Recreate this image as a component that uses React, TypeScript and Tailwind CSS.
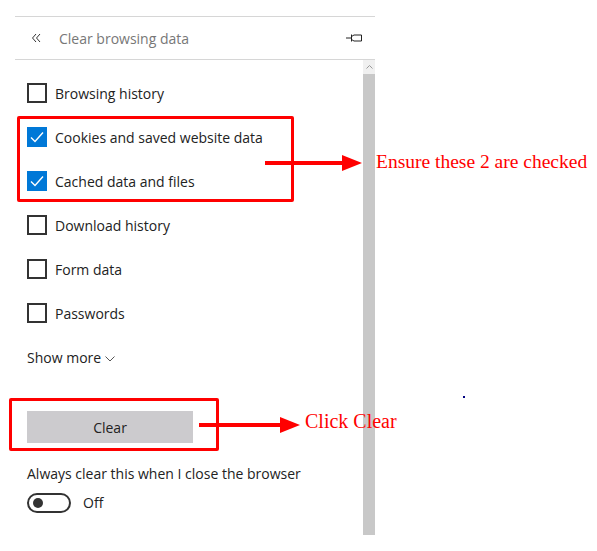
const items = [
  { label: 'Browsing history', checked: false },
  { label: 'Cookies and saved website data', checked: true },
  { label: 'Cached data and files', checked: true },
  { label: 'Download history', checked: false },
  { label: 'Form data', checked: false },
  { label: 'Passwords', checked: false },
];

function Checkbox({ checked }: { checked: boolean }) {
  if (checked) {
    return (
      <div className="w-5 h-5 bg-[#0078d7] flex items-center justify-center shrink-0">
        <svg width="14" height="12" viewBox="0 0 14 12" fill="none">
          <path d="M1 6.5 L5 10.5 L13 1.5" stroke="white" strokeWidth="1.4" />
        </svg>
      </div>
    );
  }
  return <div className="w-5 h-5 border-2 border-[#333] shrink-0" />;
}

function Arrow({ width }: { width: number }) {
  return (
    <svg width={width} height="20" viewBox={`0 0 ${width} 20`}>
      <rect x="0" y="8" width={width - 18} height="4" fill="#ff0000" />
      <polygon points={`${width - 20},2 ${width},10 ${width - 20},18`} fill="#ff0000" />
    </svg>
  );
}

export default function App() {
  return (
    <div className="relative w-[597px] h-[551px] bg-white overflow-hidden font-['Open_Sans','Noto_Sans',sans-serif] text-[#222]">
      <div className="ml-[15px] mt-4 w-[360px] border-t border-[#d6d6d6]">
        {/* Header */}
        <div className="h-[43px] flex items-center border-b border-[#d6d6d6] pl-[16px] pr-[13px]">
          <svg width="10" height="10" viewBox="0 0 10 10" fill="none" className="mr-[18px]">
            <path d="M5 1 L1.5 5 L5 9 M9 1 L5.5 5 L9 9" stroke="#333" strokeWidth="1" />
          </svg>
          <span className="flex-1 text-[14px] text-[#777]">Clear browsing data</span>
          <svg width="16" height="10" viewBox="0 0 16 10" fill="none">
            <path d="M0 5 H5 M5.5 1.5 V8.5 M5.5 3.5 L8 2 H15.5 V8 H8 L5.5 6.5" stroke="#222" strokeWidth="1" />
          </svg>
        </div>

        {/* Body */}
        <div className="flex h-[475px]">
          <div className="flex-1 pl-3 pt-[11px] flex flex-col">
            {items.map(item => (
              <div key={item.label} className="h-[44px] flex items-center gap-2">
                <Checkbox checked={item.checked} />
                <span className="text-[14px]">{item.label}</span>
              </div>
            ))}
            <div className="h-[44px] flex items-center gap-1 text-[14px]">
              Show more
              <svg width="10" height="6" viewBox="0 0 10 6" fill="none" className="mt-[3px]">
                <path d="M0.5 0.5 L5 5 L9.5 0.5" stroke="#555" strokeWidth="1" />
              </svg>
            </div>
            <button className="mt-[32px] w-[166px] h-[32px] bg-[#cccbce] text-[14px] text-[#222]">Clear</button>
            <div className="mt-[21px] text-[14px] leading-5">Always clear this when I close the browser</div>
            <div className="mt-[8px] flex items-center gap-3">
              <div className="w-[44px] h-[20px] rounded-full border-2 border-[#333] flex items-center pl-[4px]">
                <div className="w-[10px] h-[10px] rounded-full bg-[#333]" />
              </div>
              <span className="text-[14px]">Off</span>
            </div>
          </div>
          {/* Scrollbar */}
          <div className="w-[12px] flex flex-col">
            <div className="h-[14px] bg-[#f0f0f0] flex items-center justify-center">
              <svg width="7" height="4" viewBox="0 0 7 4" fill="none">
                <path d="M0.5 3.5 L3.5 0.5 L6.5 3.5" stroke="#999" strokeWidth="1" />
              </svg>
            </div>
            <div className="flex-1 bg-[#c8c8c8]" />
          </div>
        </div>
      </div>

      {/* Annotations */}
      <div className="absolute left-[17px] top-[116px] w-[277px] h-[86px] border-[3px] border-[#ff0000] rounded-[2px]" />
      <div className="absolute left-[265px] top-[153px]">
        <Arrow width={97} />
      </div>
      <div className="absolute left-[376px] top-[150px] font-['Liberation_Serif',serif] text-[19.5px] leading-6 text-[#ff0000]">
        Ensure these 2 are checked
      </div>

      <div className="absolute left-[9px] top-[398px] w-[210px] h-[53px] border-[3px] border-[#ff0000] rounded-[2px]" />
      <div className="absolute left-[199px] top-[415px]">
        <Arrow width={101} />
      </div>
      <div className="absolute left-[305px] top-[409px] font-['Liberation_Serif',serif] text-[20px] leading-6 text-[#ff0000]">
        Click Clear
      </div>
      <div className="absolute left-[463px] top-[396px] w-[2px] h-[2px] bg-[#000080]" />
    </div>
  );
}
